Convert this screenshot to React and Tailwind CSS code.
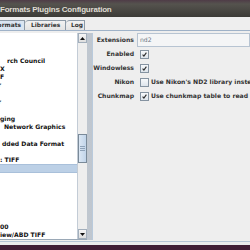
const rows = [
  { t: "rch Council", c: "pl-[7px]" },
  { t: "X", c: "pl-0" },
  { t: "F", c: "pl-0" },
  { t: "r", c: "-ml-[2px]" },
  { t: "", c: "" },
  { t: "r", c: "-ml-[2px]" },
  { t: "", c: "" },
  { t: "ging", c: "pl-0" },
  { t: "Network Graphics", c: "pl-[4px]" },
  { t: "", c: "" },
  { t: "dded Data Format", c: "pl-[2px]" },
  { t: "", c: "" },
  { t: ": TIFF", c: "pl-0" },
  { t: "", c: "", sel: true },
  { t: "", c: "" },
  { t: "", c: "" },
  { t: "", c: "" },
  { t: "", c: "" },
  { t: "", c: "" },
  { t: "", c: "" },
  { t: "00", c: "pl-0" },
  { t: "iew/ABD TIFF", c: "pl-0" },
];

function Check({ on }) {
  return (
    <div className="w-[9px] h-[9px] shrink-0 border border-[#8593a1] bg-[linear-gradient(to_bottom,#f7f9fb,#dde4eb)] flex items-center justify-center">
      {on && (
        <svg width="7" height="7" viewBox="0 0 7 7">
          <path d="M1.6 3.7 L2.9 5.1 L5.4 1.6" fill="none" stroke="#2a2a2a" strokeWidth="1.1" />
        </svg>
      )}
    </div>
  );
}

function FormRow({ label, children }) {
  return (
    <div className="h-[14px] flex items-center">
      <div className="w-[41px] shrink-0 text-right text-[6.1px] font-bold text-[#333] leading-none whitespace-nowrap">{label}</div>
      <div className="flex-1 min-w-0 ml-[3px] flex items-center h-full">{children}</div>
    </div>
  );
}

export default function App() {
  return (
    <div className="w-[250px] h-[250px] overflow-hidden flex flex-col bg-[#3f1d36] font-['DejaVu_Sans','Liberation_Sans',sans-serif]">
      {/* title bar */}
      <div className="h-[17px] shrink-0 bg-[linear-gradient(to_bottom,#4f3c47_0px,#55534e_4px,#3c3b37_17px)] flex items-center">
        <span className="font-['Liberation_Sans',Arial,sans-serif] text-[8px] font-bold tracking-[-0.2px] text-[#dfdbd2] leading-none pt-[2px] whitespace-nowrap">
          Formats Plugins Configuration
        </span>
      </div>

      {/* window body */}
      <div className="h-[228px] shrink-0 bg-[#eeeeee] flex flex-col">
        {/* tab strip */}
        <div className="h-[14px] shrink-0 flex items-end border-b border-[#9fb2c8]">
          <div className="w-[26px] h-[10px] -ml-[1px] bg-[#dae5f1] border-t border-r border-[#8d9aa7] rounded-tr-[1px] flex items-center justify-end pr-[3px]">
            <span className="text-[5.9px] font-bold text-[#333] leading-none whitespace-nowrap">ormats</span>
          </div>
          <div className="w-[41px] h-[10px] bg-[linear-gradient(to_bottom,#f2f2f2,#e3e3e3)] border-t border-r border-[#8d9aa7] rounded-tl-[4px] flex items-center pl-[6px]">
            <span className="text-[5.9px] font-bold text-[#333] leading-none">Libraries</span>
          </div>
          <div className="w-[19px] h-[10px] bg-[linear-gradient(to_bottom,#f2f2f2,#e3e3e3)] border-t border-r border-[#8d9aa7] rounded-tl-[4px] flex items-center pl-[5px]">
            <span className="text-[5.9px] font-bold text-[#333] leading-none">Log</span>
          </div>
        </div>

        {/* content */}
        <div className="h-[210px] shrink-0 flex pt-[2px] pb-[1px]">
          {/* list + scrollbar */}
          <div className="w-[87px] shrink-0 flex border-b border-[#9aa8b6]">
            <div className="w-[77px] bg-white overflow-hidden pt-[23.5px]">
              {rows.map((r, i) => (
                <div
                  key={i}
                  className={
                    "h-[8.3px] flex items-center whitespace-nowrap text-[6.1px] font-bold text-[#111] leading-none " +
                    (r.sel ? "bg-[#bcd0e6] border-y border-[#a9c0da]" : "")
                  }
                >
                  <span className={r.c}>{r.t}</span>
                </div>
              ))}
            </div>
            <div className="w-[10px] flex flex-col bg-[#eeeeee] border-l border-[#c3ccd6]">
              <div className="h-[10px] shrink-0 border border-[#a3afbc] bg-[linear-gradient(to_bottom,#f6f6f6,#dedede)] flex items-center justify-center">
                <svg width="5" height="3" viewBox="0 0 5 3"><path d="M0 3 L2.5 0 L5 3 Z" fill="#111" /></svg>
              </div>
              <div className="h-[91px] shrink-0" />
              <div className="h-[29px] shrink-0 border border-[#7a8a99] bg-[linear-gradient(to_right,#dbe7f4,#c2d5ea)] flex flex-col items-center justify-center gap-[1px]">
                <div className="w-[5px] h-[1px] bg-[#8ea2b8]" />
                <div className="w-[5px] h-[1px] bg-[#8ea2b8]" />
                <div className="w-[5px] h-[1px] bg-[#8ea2b8]" />
              </div>
              <div className="flex-1" />
              <div className="h-[10px] shrink-0 border border-[#a3afbc] bg-[linear-gradient(to_bottom,#f6f6f6,#dedede)] flex items-center justify-center">
                <svg width="5" height="3" viewBox="0 0 5 3"><path d="M0 0 L2.5 3 L5 0 Z" fill="#111" /></svg>
              </div>
            </div>
          </div>

          {/* splitter */}
          <div className="w-[5px] shrink-0 bg-[#e6e8ea] bg-[radial-gradient(circle,#aab4c0_0.6px,transparent_0.9px)] bg-[length:2px_2px]" />

          {/* right panel */}
          <div className="flex-1 min-w-0 border-l border-[#b9cadc] bg-[#eeeeee] overflow-hidden">
            <FormRow label="Extensions">
              <div className="h-[14px] flex-1 border border-[#b7c4d2] bg-[#f4f5f6] flex items-center pl-[2px]">
                <span className="text-[6.1px] text-[#6d7585] leading-none">nd2</span>
              </div>
            </FormRow>
            <FormRow label="Enabled">
              <div className="pl-[3px]"><Check on /></div>
            </FormRow>
            <FormRow label="Windowless">
              <div className="pl-[3px]"><Check on /></div>
            </FormRow>
            <FormRow label="Nikon">
              <div className="pl-[3px] flex items-center gap-[2px] whitespace-nowrap">
                <Check />
                <span className="text-[6.1px] font-bold text-[#333] leading-none">Use Nikon's ND2 library instead</span>
              </div>
            </FormRow>
            <FormRow label="Chunkmap">
              <div className="pl-[3px] flex items-center gap-[2px] whitespace-nowrap">
                <Check on />
                <span className="text-[6.1px] font-bold text-[#333] leading-none">Use chunkmap table to read</span>
              </div>
            </FormRow>
          </div>
        </div>

        {/* bottom edge */}
        <div className="flex-1 border-t border-[#b4c4d6] bg-[#e9ebed]" />
      </div>
    </div>
  );
}
